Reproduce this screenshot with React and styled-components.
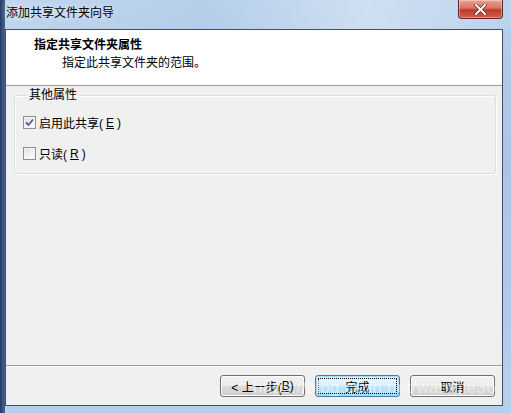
import React from 'react';
import styled, { createGlobalStyle } from 'styled-components';

const GlobalStyle = createGlobalStyle`
  html, body {
    margin: 0;
    padding: 0;
    background: #ffffff;
  }
  body {
    font-family: "Liberation Sans", "Noto Sans CJK SC", sans-serif;
    font-size: 12px;
    color: #000;
  }
`

const Window = styled.div`
  position: relative;
  width: 511px;
  height: 413px;
  box-sizing: border-box;
  display: flex;
  flex-direction: column;
  padding: 0 8px 7px 5px;
  overflow: hidden;
  background:
    linear-gradient(90deg, #2a3a63 0px, #3d5586 3px, #4a6190 5px, transparent 5px),
    linear-gradient(180deg, #b6cfeb 0%, #a9c5e6 40%, #b3d0ef 100%);
`

const TitleBar = styled.div`
  height: 29px;
  display: flex;
  align-items: flex-start;
  justify-content: space-between;
  flex-shrink: 0;
  background: linear-gradient(90deg, rgba(255,255,255,0.15), rgba(255,255,255,0) 40%, rgba(255,255,255,0.35) 72%, rgba(255,255,255,0.1));
  margin-right: -8px;
`

const Title = styled.div`
  padding: 5px 0 0 1px;
  font-size: 12px;
  line-height: 17px;
  color: #000;
  text-shadow: 0 0 6px rgba(255,255,255,0.9);
`

const CloseButton = styled.div`
  width: 45px;
  height: 19px;
  margin-right: 8px;
  box-sizing: border-box;
  border: 1px solid #5b2a22;
  border-top: none;
  border-radius: 0 0 4px 4px;
  background: linear-gradient(180deg, #e8a493 0%, #d7735f 45%, #c0392a 55%, #d0604a 100%);
  display: flex;
  align-items: center;
  justify-content: center;
  box-shadow: inset 0 0 0 1px rgba(255,255,255,0.35);
`

const Client = styled.div`
  flex: 1;
  display: flex;
  flex-direction: column;
  border: 1px solid #434f61;
  background: #f0f0f0;
`

const Header = styled.div`
  height: 56px;
  box-sizing: border-box;
  background: #ffffff;
  border-bottom: 1px solid #a0a0a0;
  padding: 7px 0 0 28px;
`

const Heading = styled.div`
  font-weight: bold;
  font-size: 12px;
  line-height: 17px;
`

const SubHeading = styled.div`
  padding: 1px 0 0 28px;
  font-size: 12px;
  line-height: 17px;
`

const Body = styled.div`
  flex: 1;
  padding: 2px 6px 0 8px;
`

const GroupBox = styled.fieldset`
  margin: 0;
  padding: 12px 0 11px 8px;
  height: 86px;
  box-sizing: border-box;
  border: 1px solid #d5dfe5;
  border-radius: 3px;
  box-shadow: inset 1px 1px 0 #fff, 1px 1px 0 #fff;
`

const Legend = styled.legend`
  padding: 0 2px;
  margin-left: 4px;
  font-size: 12px;
  line-height: 14px;
`

const CheckRow = styled.label`
  display: flex;
  align-items: center;
  gap: 3px;
  height: 17px;
  margin-bottom: ${p => p.$gap || 0}px;
  font-size: 12px;
`

const Box = styled.span`
  width: 13px;
  height: 13px;
  box-sizing: border-box;
  border: 1px solid #8e8f8f;
  background: linear-gradient(135deg, #dcdcdc 0%, #f4f4f4 60%, #ffffff 100%);
  box-shadow: inset 0 0 0 1px #f4f4f4;
  display: flex;
  align-items: center;
  justify-content: center;
`

const Mnemonic = styled.span`
  text-decoration: underline;
`

const Footer = styled.div`
  height: 40px;
  box-sizing: border-box;
  border-top: 1px solid #a0a0a0;
  display: flex;
  justify-content: flex-end;
  align-items: flex-start;
  gap: 10px;
  padding: 9px 7px 0 0;
  box-shadow: inset 0 1px 0 #fff;
`

const Button = styled.div`
  width: 85px;
  height: 22px;
  box-sizing: border-box;
  border: 1px solid ${p => (p.$default ? '#3c7fb1' : '#707070')};
  border-radius: 3px;
  background: ${p =>
    p.$default
      ? 'linear-gradient(180deg, #eaf6fd 0%, #d9f0fc 50%, #bee6fd 50%, #a7d9f5 100%)'
      : 'linear-gradient(180deg, #f2f2f2 0%, #ebebeb 50%, #dddddd 50%, #cfcfcf 100%)'};
  box-shadow: inset 0 0 0 1px ${p => (p.$default ? '#a8dcf6' : '#fcfcfc')};
  display: flex;
  align-items: center;
  justify-content: center;
  font-size: 12px;
  position: relative;
`

const Focus = styled.span`
  position: absolute;
  inset: 2px;
  border: 1px dotted #000;
`

const Watermark = styled.div`
  position: absolute;
  left: 253px;
  top: 378px;
  font-family: "Liberation Sans", sans-serif;
  font-size: 17px;
  color: rgba(255, 255, 255, 0.5);
  letter-spacing: 0.3px;
  pointer-events: none;
`

const Check = () => (
  <svg width="9" height="9" viewBox="0 0 9 9">
    <path d="M1 4.5 L3.5 7 L8 1.5" fill="none" stroke="#4a5f97" strokeWidth="1.8" />
  </svg>
)

const CloseGlyph = () => (
  <svg width="13" height="11" viewBox="0 0 13 11">
    <path d="M2 1 L11 10 M11 1 L2 10" stroke="#5a2a24" strokeWidth="3.4" strokeLinecap="square" />
    <path d="M2 1 L11 10 M11 1 L2 10" stroke="#ffffff" strokeWidth="2" strokeLinecap="square" />
  </svg>
)

const App = () => {
  return (
    <>
      <GlobalStyle />
      <Window>
        <TitleBar>
          <Title>添加共享文件夹向导</Title>
          <CloseButton><CloseGlyph /></CloseButton>
        </TitleBar>
        <Client>
          <Header>
            <Heading>指定共享文件夹属性</Heading>
            <SubHeading>指定此共享文件夹的范围。</SubHeading>
          </Header>
          <Body>
            <GroupBox>
              <Legend>其他属性</Legend>
              <CheckRow $gap={14}>
                <Box><Check /></Box>
                启用此共享(<Mnemonic>E</Mnemonic>)
              </CheckRow>
              <CheckRow>
                <Box />
                只读(<Mnemonic>R</Mnemonic>)
              </CheckRow>
            </GroupBox>
          </Body>
          <Footer>
            <Button>&lt; 上一步(<Mnemonic>B</Mnemonic>)</Button>
            <Button $default>完成<Focus /></Button>
            <Button>取消</Button>
          </Footer>
        </Client>
        <Watermark>https://blog.csdn.net/wangjie36</Watermark>
      </Window>
    </>
  );
}

export default App;
